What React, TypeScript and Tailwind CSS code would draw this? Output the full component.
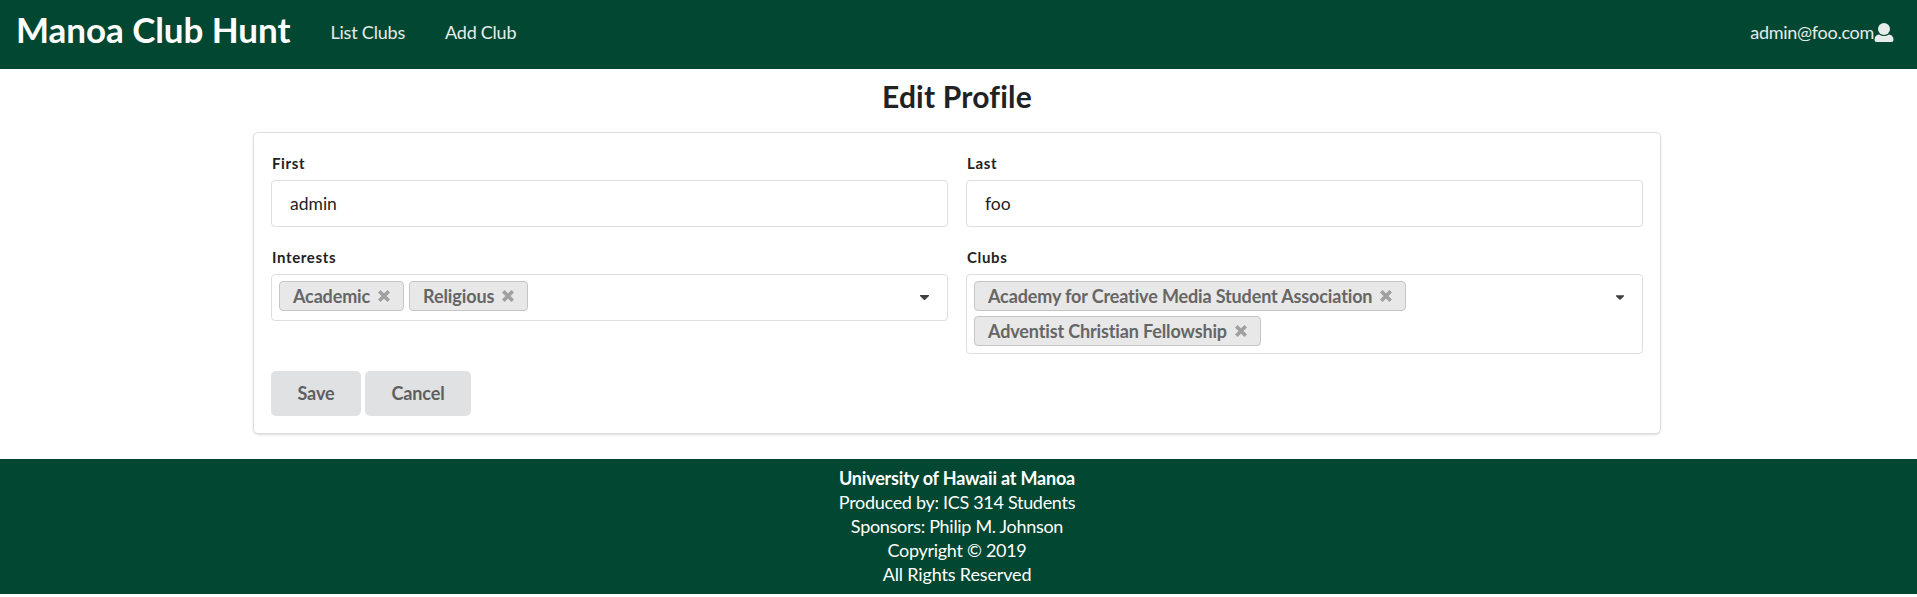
import { ReactNode } from "react";

function Tag({ children, tracking = "tracking-[-0.14px]" }: { children: ReactNode; tracking?: string }) {
  return (
    <span
      className={`flex h-[30px] items-center rounded-[4px] border border-[#c5c5c5] bg-[#e8e8e8] px-[13px] text-[18px] leading-[18px] font-bold whitespace-nowrap text-[#666] ${tracking}`}
    >
      {children}
      <svg viewBox="0 0 12 12" className="ml-2 h-3 w-3" fill="none" stroke="#a0a0a0" strokeWidth="3.6">
        <path d="M1.3 1.3 10.7 10.7M10.7 1.3 1.3 10.7" />
      </svg>
    </span>
  );
}

function Field({ label, children }: { label: string; children: ReactNode }) {
  return (
    <div className="flex-1">
      <div className="mb-[8px] h-[18px] pl-px text-[15px] leading-[18px] font-bold tracking-[0.65px]">{label}</div>
      {children}
    </div>
  );
}

function TextBox({ value }: { value: string }) {
  return (
    <div className="flex h-[47px] items-center rounded-[4px] border border-[#dededf] px-[18px] pt-px text-[17.5px]">{value}</div>
  );
}

function Select({ children }: { children: ReactNode }) {
  return (
    <div className="flex min-h-[47px] items-start justify-between rounded-[4px] border border-[#dededf] pt-[6px] pr-[18px] pb-[7.5px] pl-[7px]">
      <div className="flex flex-wrap gap-x-[5px] gap-y-[4.5px]">{children}</div>
      <svg viewBox="0 0 9 5" className="mt-[14px] h-[5px] w-[9px]" fill="#404040">
        <path d="M0 0h9v1L5.2 4.7Q4.5 5.2 3.8 4.7L0 1z" />
      </svg>
    </div>
  );
}

export default function App() {
  return (
    <div className="font-[Lato,sans-serif] text-[#212223]">
      <header className="flex h-[69px] items-start bg-[#024731] text-white">
        <div className="pt-[9px] pl-4 text-[35px] leading-[40px] font-bold tracking-[-0.06px] whitespace-nowrap">Manoa Club Hunt</div>
        <nav className="flex gap-10 pt-5 pl-10 text-[18px] leading-6 text-white/90">
          <span className="tracking-[-0.2px]">List Clubs</span>
          <span className="tracking-[-0.25px]">Add Club</span>
        </nav>
        <div className="ml-auto flex pt-5 pr-[23px] text-[18px] leading-6 tracking-[-0.28px] text-white/90">
          admin@foo.com
          <svg viewBox="0 0 20 19" className="mt-[3px] h-[19px] w-5" fill="#e6edea">
            <circle cx="10" cy="6" r="6" />
            <path d="M5 11.5Q10 14.5 15 11.5Q19.5 12 19.5 17Q19.5 19 17.5 19H2.500Q.5 19 .5 17Q.5 12 5 11.500Z" />
          </svg>
        </div>
      </header>
      <h1 className="pt-[7px] pr-[3px] text-center text-[30px] leading-[40px] font-bold tracking-[0.2px]">Edit Profile</h1>
      <div className="flex justify-center pt-4 pr-[3px] pb-[25px]">
        <main className="h-[302px] w-[1408px] rounded-[5px] border border-[#dededf] px-[17px] pt-[21px] shadow-[0_1px_2px_0_rgba(34,36,38,0.15)]">
          <div className="flex gap-[18px]">
            <Field label="First"><TextBox value="admin" /></Field>
            <Field label="Last"><TextBox value="foo" /></Field>
          </div>
          <div className="mt-[21px] flex gap-[18px]">
            <Field label="Interests">
              <Select>
                <Tag tracking="tracking-[-0.15px]">Academic</Tag>
                <Tag tracking="tracking-[-0.08px]">Religious</Tag>
              </Select>
            </Field>
            <Field label="Clubs">
              <Select>
                <Tag>Academy for Creative Media Student Association</Tag>
                <Tag>Adventist Christian Fellowship</Tag>
              </Select>
            </Field>
          </div>
          <div className="mt-[17px] flex gap-1 text-[18px] font-bold tracking-[-0.1px] text-[#5e5f60]">
            <button className="h-[45px] w-[90px] rounded-[5px] bg-[#e0e1e2]">Save</button>
            <button className="h-[45px] w-[106px] rounded-[5px] bg-[#e0e1e2]">Cancel</button>
          </div>
        </main>
      </div>
      <footer className="h-[135px] bg-[#024731] pt-[7px] pr-[3px] text-center text-[18px] leading-6 tracking-[-0.3px] text-white">
        <div className="font-bold tracking-[-0.2px]">University of Hawaii at Manoa</div>
        <div>Produced by: ICS 314 Students</div>
        <div>Sponsors: Philip M. Johnson</div>
        <div>Copyright © 2019</div>
        <div className="tracking-[-0.15px]">All Rights Reserved</div>
      </footer>
    </div>
  );
}
